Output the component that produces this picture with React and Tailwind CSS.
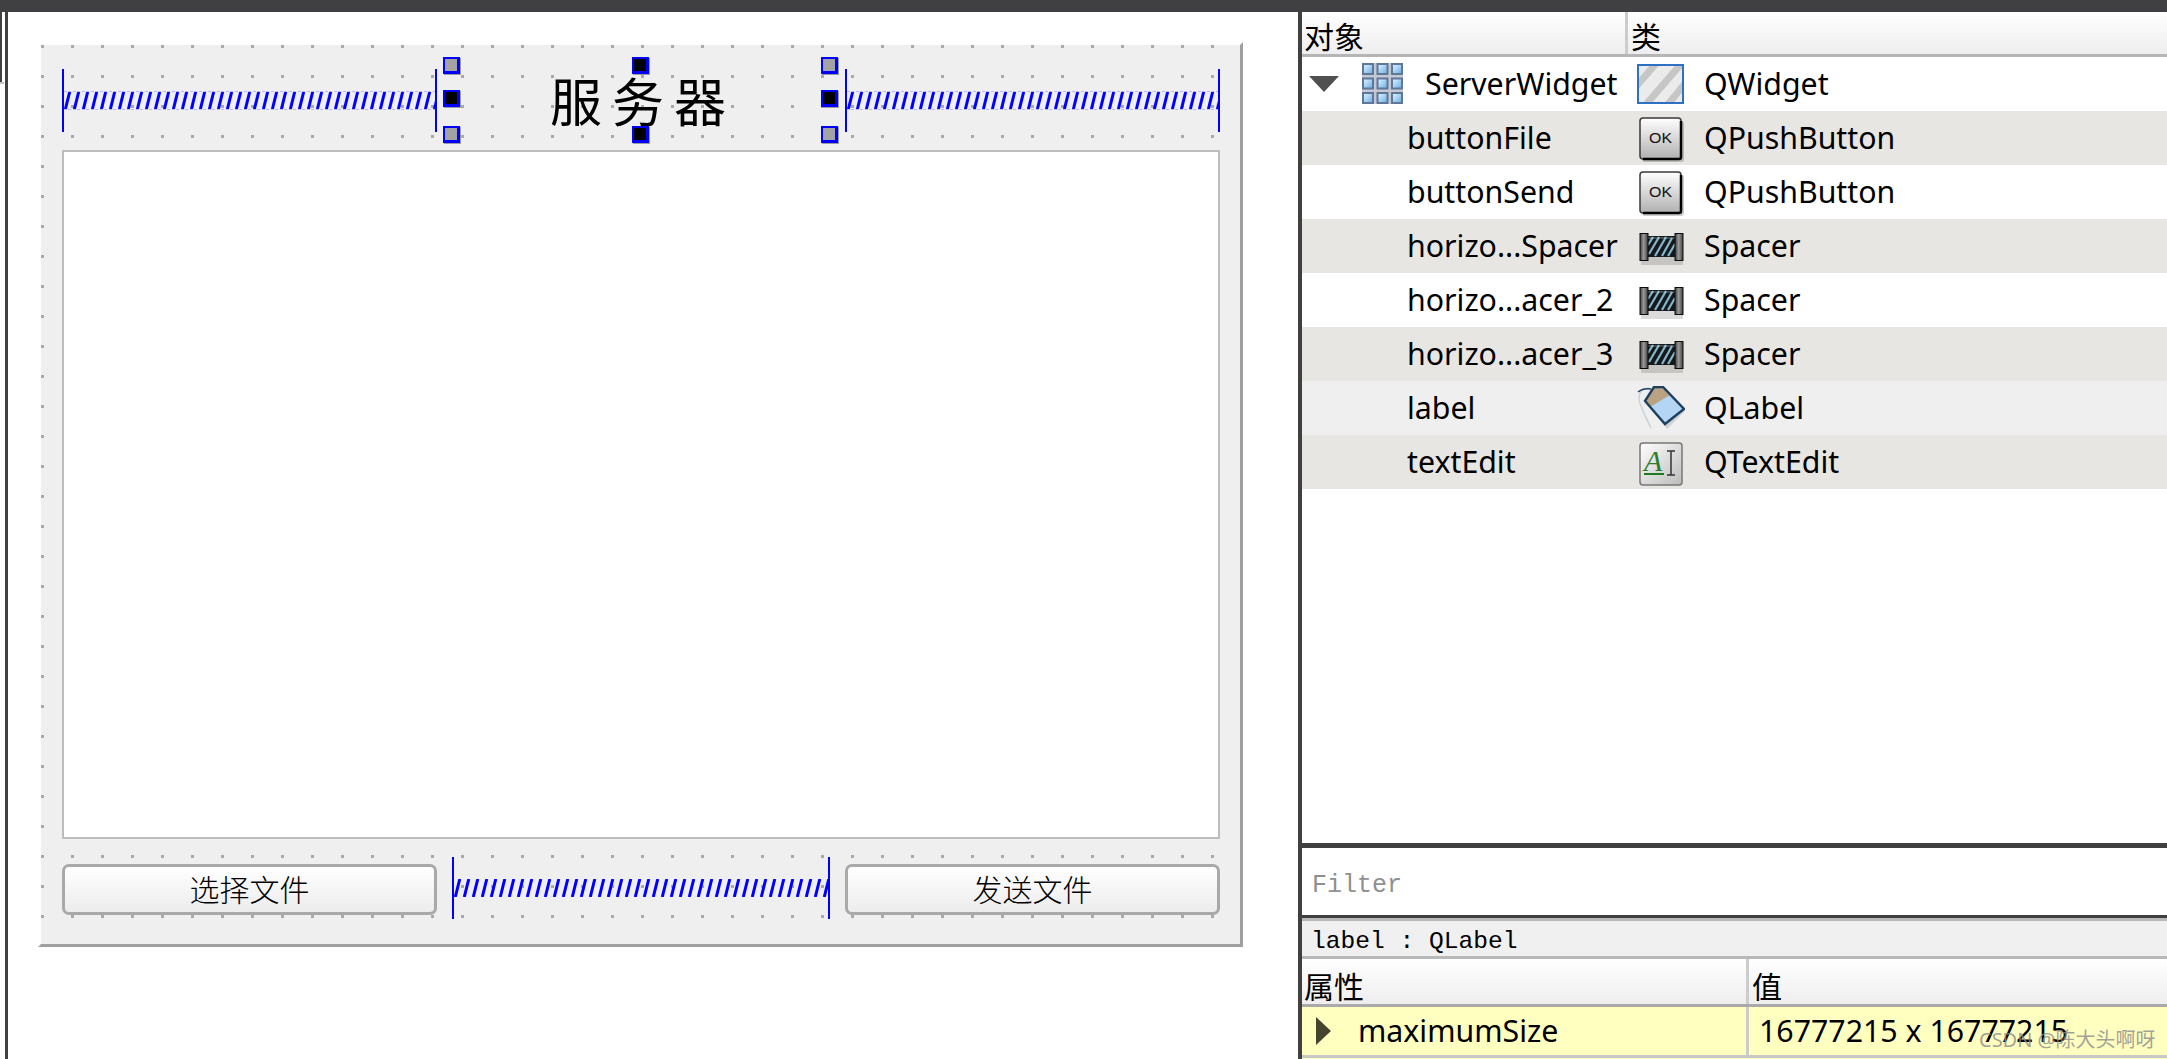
import React from 'react';

const sans = 'font-["Noto_Sans","Noto_Sans_CJK_SC",sans-serif]';
const cjk = 'font-["Noto_Sans_CJK_SC",sans-serif]';
const mono = 'font-["Liberation_Mono","Noto_Sans_CJK_SC",monospace]';

// designer's spacer: two end posts with a hatched band between
const SpacerBar = ({ id, width, height }) => (
  <svg width={width} height={height} className="block shrink-0">
    <defs>
      <pattern id={id} x="1" y={height / 2 - 9} width="9" height="18" patternUnits="userSpaceOnUse">
        <path d="M6.8 0 L2.3 18" stroke="#0000ff" strokeWidth="3" fill="none" />
      </pattern>
    </defs>
    <rect x="1" y={height / 2 - 9} width={width - 2} height="18" fill={`url(#${id})`} />
    <rect x="0" y="0" width="2" height={height} fill="#0000ff" />
    <rect x={width - 2} y="0" width="2" height={height} fill="#0000ff" />
  </svg>
);

const Handle = ({ className, dark }) => (
  <div
    className={`absolute w-[17px] h-[17px] border-t-2 border-l-2 border-r-[3px] border-b-[3px] border-[#0000ff] shadow-[1px_1px_0_#9a9a9a] ${dark ? 'bg-black' : 'bg-[#a3a3a3]'} ${className}`}
  />
);

const FormButton = ({ children }) => (
  <button className={`w-[375px] h-[51px] mt-[7px] pb-[4px] shrink-0 rounded-[7px] border-[3px] border-[#a9a9a9] bg-gradient-to-b from-white to-[#ececec] text-[30px] leading-none text-black font-light ${cjk}`}>
    {children}
  </button>
);

const GridIcon = () => (
  <svg width="41" height="42" viewBox="0 0 41 42" className="shrink-0">
    <defs>
      <linearGradient id="cell-fill" x1="0" y1="0" x2="1" y2="1">
        <stop offset="0" stopColor="#d6f0ff" />
        <stop offset="1" stopColor="#74b4e6" />
      </linearGradient>
    </defs>
    <rect x="0" y="0" width="41" height="41" fill="#c3c9d2" />
    {[0, 14.5, 29].map((y) =>
      [0, 14.5, 29].map((x) => (
        <g key={`${x}-${y}`}>
          <rect x={x} y={y} width="12" height="12" fill="#60779a" />
          <rect x={x + 2} y={y + 2} width="8" height="8" fill="url(#cell-fill)" />
        </g>
      ))
    )}
  </svg>
);

const WidgetIcon = () => (
  <svg width="47" height="40" viewBox="0 0 47 40">
    <defs>
      <clipPath id="widget-clip">
        <rect x="2" y="2" width="43" height="36" />
      </clipPath>
    </defs>
    <rect x="1" y="1" width="45" height="38" fill="#ebebeb" stroke="#2f70c2" strokeWidth="2" />
    <g clipPath="url(#widget-clip)" stroke="#c6c6c6" strokeWidth="7">
      <path d="M-4 26 L22 -4" />
      <path d="M6 44 L44 0" />
      <path d="M28 44 L56 10" />
    </g>
  </svg>
);

const OkIcon = () => (
  <svg width="46" height="46" viewBox="0 0 46 46">
    <defs>
      <linearGradient id="ok-fill" x1="0" y1="0" x2="0" y2="1">
        <stop offset="0" stopColor="#ffffff" />
        <stop offset="1" stopColor="#b0b0b0" />
      </linearGradient>
    </defs>
    <rect x="3" y="4" width="42" height="41" rx="3" fill="#000" opacity="0.2" />
    <rect x="1" y="1" width="41" height="41" rx="3" fill="url(#ok-fill)" stroke="#3a3a3a" strokeWidth="1.5" />
    <path d="M42 4 V40 Q42 42 40 42 H4" stroke="#000" strokeWidth="2.5" fill="none" />
    <text x="10" y="26" fontSize="14" textLength="23" lengthAdjust="spacingAndGlyphs" fontFamily="Liberation Sans, sans-serif" fill="#111">OK</text>
  </svg>
);

const SpacerIcon = () => (
  <svg width="46" height="34" viewBox="0 0 46 34">
    <defs>
      <linearGradient id="post-fill" x1="0" y1="0" x2="1" y2="0">
        <stop offset="0" stopColor="#3d3d3d" />
        <stop offset="0.45" stopColor="#9a9a9a" />
        <stop offset="1" stopColor="#3d3d3d" />
      </linearGradient>
    </defs>
    <rect x="2" y="5" width="42" height="27" fill="#000" opacity="0.14" />
    <rect x="9" y="3" width="27" height="21" fill="#15191c" />
    <g stroke="#86b6cc" strokeWidth="2.2">
      <path d="M9 12 L14 4" />
      <path d="M10 21 L20 4" />
      <path d="M16 23 L27 4" />
      <path d="M23 23 L33 5" />
      <path d="M29 23 L36 11" />
    </g>
    <path d="M9 5 H36" stroke="#d4e4ec" strokeWidth="1" opacity="0.5" />
    <rect x="1" y="0.5" width="8" height="27" fill="url(#post-fill)" stroke="#0c0c0c" />
    <rect x="36" y="0.5" width="8" height="27" fill="url(#post-fill)" stroke="#0c0c0c" />
  </svg>
);

const TagIcon = () => (
  <svg width="48" height="44" viewBox="0 0 48 44">
    <path d="M12 2 C2 2 0 12 4 20 C7 28 11 36 14 42" stroke="#c8d0d8" strokeWidth="1.5" fill="none" />
    <path d="M30 43 L11 20 L32 8 L48 25 Z" fill="#1f3f5f" opacity="0.16" />
    <path d="M17 1 L26 1 L47 23 L28 38 L8 15 Z" fill="#b4d6f4" />
    <path d="M17 1 L26 1 L33 9 L13 21 L8 15 Z" fill="#b9a283" />
    <path d="M17 1 L26 1 L47 23 L28 38 L8 15 Z" fill="none" stroke="#1f3f5f" strokeWidth="2.4" />
    <path d="M1 6 Q6 2 14 3" stroke="#1f3f5f" strokeWidth="1.5" fill="none" />
  </svg>
);

const TextEditIcon = () => (
  <svg width="45" height="44" viewBox="0 0 45 44">
    <defs>
      <linearGradient id="edit-fill" x1="0" y1="0" x2="1" y2="1">
        <stop offset="0" stopColor="#ffffff" />
        <stop offset="1" stopColor="#bcbcbc" />
      </linearGradient>
    </defs>
    <rect x="1" y="1" width="42" height="42" rx="3" fill="url(#edit-fill)" stroke="#777" strokeWidth="1.5" />
    <text x="5" y="29" fontSize="30" fontStyle="italic" fontFamily="Liberation Serif, serif" fill="#2c7d2c">A</text>
    <rect x="5" y="31" width="20" height="2" fill="#1f7a1f" />
    <path d="M28 9 H36 M32 9 V33 M28 33 H36" stroke="#333" strokeWidth="1.5" fill="none" />
  </svg>
);

const TreeRow = ({ bg, name, type, icon, root }) => (
  <div className={`flex h-[54px] items-center text-[30.3px] leading-none text-black ${bg}`}>
    <div className="w-[326px] shrink-0 flex items-center">
      {root ? (
        <>
          <svg width="30" height="16" viewBox="0 0 30 16" className="ml-[7px] mr-[23px] shrink-0">
            <path d="M0 0 H30 L15 16 Z" fill="#505050" />
          </svg>
          <GridIcon />
          <span className="ml-[22px] pt-[1px] whitespace-nowrap">{name}</span>
        </>
      ) : (
        <span className="ml-[105px] pt-[1px] whitespace-nowrap">{name}</span>
      )}
    </div>
    <div className="w-[66px] shrink-0 pl-[9px]">{icon}</div>
    <span className="ml-[10px] pt-[1px] whitespace-nowrap">{type}</span>
  </div>
);

const rows = [
  { bg: 'bg-white', name: 'ServerWidget', type: 'QWidget', icon: <WidgetIcon />, root: true },
  { bg: 'bg-[#e7e6e2]', name: 'buttonFile', type: 'QPushButton', icon: <div className="pl-[2px] pt-[3px]"><OkIcon /></div> },
  { bg: 'bg-white', name: 'buttonSend', type: 'QPushButton', icon: <div className="pl-[2px] pt-[3px]"><OkIcon /></div> },
  { bg: 'bg-[#e7e6e2]', name: 'horizo...Spacer', type: 'Spacer', icon: <div className="pl-[2px] pt-[8px]"><SpacerIcon /></div> },
  { bg: 'bg-white', name: 'horizo...acer_2', type: 'Spacer', icon: <div className="pl-[2px] pt-[8px]"><SpacerIcon /></div> },
  { bg: 'bg-[#e7e6e2]', name: 'horizo...acer_3', type: 'Spacer', icon: <div className="pl-[2px] pt-[8px]"><SpacerIcon /></div> },
  { bg: 'bg-[#efefef]', name: 'label', type: 'QLabel', icon: <TagIcon /> },
  { bg: 'bg-[#e7e6e2]', name: 'textEdit', type: 'QTextEdit', icon: <div className="pl-[2px] pt-[3px]"><TextEditIcon /></div> },
];

const FormCanvas = () => (
  <div className="flex-1 bg-white pl-[30px] pt-[30px]">
    {/* transparent left/top borders give the bevelled corners of the frame */}
    <div className="w-[1205px] h-[905px] border-[3px] border-t-transparent border-l-transparent border-r-[#a0a0a0] border-b-[#a0a0a0] bg-clip-padding bg-[#efefef] bg-[radial-gradient(circle_at_1.5px_1.5px,#a9a9a9_1.8px,transparent_1.8px)] bg-[length:30px_30px] pl-[21px] pr-[20px] pt-[21px]">
      {/* top row: spacer, title, spacer */}
      <div className="flex h-[68px] items-center gap-[15px]">
        <SpacerBar id="hatch-a" width={375} height={63} />
        <div className={`relative flex h-[68px] w-[378px] shrink-0 items-center justify-center pl-[4px] text-[52px] leading-none tracking-[10px] text-black ${cjk}`}>
          服务器
          <Handle className="left-[-9px] top-[-9px]" />
          <Handle className="left-[180px] top-[-9px]" dark />
          <Handle className="right-[-8px] top-[-9px]" />
          <Handle className="left-[-9px] top-[24px]" dark />
          <Handle className="right-[-8px] top-[24px]" dark />
          <Handle className="left-[-9px] bottom-[-9px]" />
          <Handle className="left-[180px] bottom-[-9px]" dark />
          <Handle className="right-[-8px] bottom-[-9px]" />
        </div>
        <SpacerBar id="hatch-b" width={375} height={63} />
      </div>
      <div className="mt-[16px] h-[689px] border-2 border-[#bdbdbd] bg-white" />
      {/* bottom row: button, spacer, button */}
      <div className="mt-[18px] flex h-[62px] items-start gap-[15px]">
        <FormButton>选择文件</FormButton>
        <SpacerBar id="hatch-c" width={378} height={62} />
        <FormButton>发送文件</FormButton>
      </div>
    </div>
  </div>
);

const HeaderCell = ({ children, className }) => (
  <div className={`flex items-center text-[30px] leading-none text-black ${cjk} ${className}`}>{children}</div>
);

const SidePanel = () => (
  <div className={`relative flex w-[869px] shrink-0 flex-col border-l-4 border-[#404040] bg-white ${sans}`}>
    {/* object inspector */}
    <div className="flex h-[45px] shrink-0 border-b-[3px] border-[#b5b5b5] bg-gradient-to-b from-white to-[#eeeeee]">
      <HeaderCell className="w-[323px] pl-[2px] pt-[3px]">对象</HeaderCell>
      <HeaderCell className="flex-1 border-l-[3px] border-[#cccccc] pl-[3px] pt-[3px]">类</HeaderCell>
    </div>
    <div className="flex-1">
      {rows.map((row) => (
        <TreeRow key={row.name} {...row} />
      ))}
    </div>

    {/* filter */}
    <div className="h-[5px] shrink-0 bg-[#404040]" />
    <div className={`flex h-[67px] shrink-0 items-center pl-[10px] pt-[8px] text-[25px] leading-none text-[#909090] ${mono}`}>Filter</div>
    <div className="h-[3px] shrink-0 bg-[#404040]" />

    {/* property editor */}
    <div className={`flex h-[41px] shrink-0 items-center border-y-[3px] border-[#b8b8b8] bg-[#f0f0f0] pl-[9px] pt-[8px] text-[24.6px] leading-none text-black ${mono}`}>
      label : QLabel
    </div>
    <div className="flex h-[48px] shrink-0 border-b-[3px] border-[#aaaaaa] bg-gradient-to-b from-white to-[#eeeeee]">
      <HeaderCell className="w-[444px] pl-[2px] pt-[6px]">属性</HeaderCell>
      <HeaderCell className="flex-1 border-l-[3px] border-[#cccccc] pl-[3px] pt-[6px]">值</HeaderCell>
    </div>
    <div className="flex h-[48px] shrink-0 items-center bg-[#ffffbf] text-[30.3px] leading-none text-black">
      <div className="flex w-[444px] shrink-0 items-center">
        <svg width="15" height="28" viewBox="0 0 15 28" className="ml-[14px] mr-[27px] shrink-0">
          <path d="M0 0 L15 14 L0 28 Z" fill="#45452f" />
        </svg>
        <span className="pt-[1px]">maximumSize</span>
      </div>
      <div className="flex h-full flex-1 items-center border-l-[3px] border-[#cccccc] pl-[10px] pt-[1px]">16777215 x 16777215</div>
    </div>
    <div className="h-[3px] shrink-0 bg-[#c8c8c8]" />
    <div className="h-[1px] shrink-0 bg-[#ffffbf]" />

    <span className={`absolute left-[677px] bottom-[9px] whitespace-nowrap text-[20px] leading-none text-[#8a8a8a]/80 ${sans}`}>CSDN @陈大头啊呀</span>
  </div>
);

export default function App() {
  return (
    <div className="flex h-[1059px] w-[2167px] flex-col overflow-hidden bg-white">
      <div className="h-[12px] shrink-0 bg-[#404042]" />
      <div className="flex min-h-0 flex-1">
        {/* left dock edge */}
        <div className="w-[8px] shrink-0 border-r-[3px] border-[#404040] bg-white">
          <div className="h-[70px] w-[2px] bg-[#404040]" />
          <div className="h-[2px] w-[4px] bg-[#c4c4c4]" />
        </div>
        <FormCanvas />
        <SidePanel />
      </div>
    </div>
  );
}
